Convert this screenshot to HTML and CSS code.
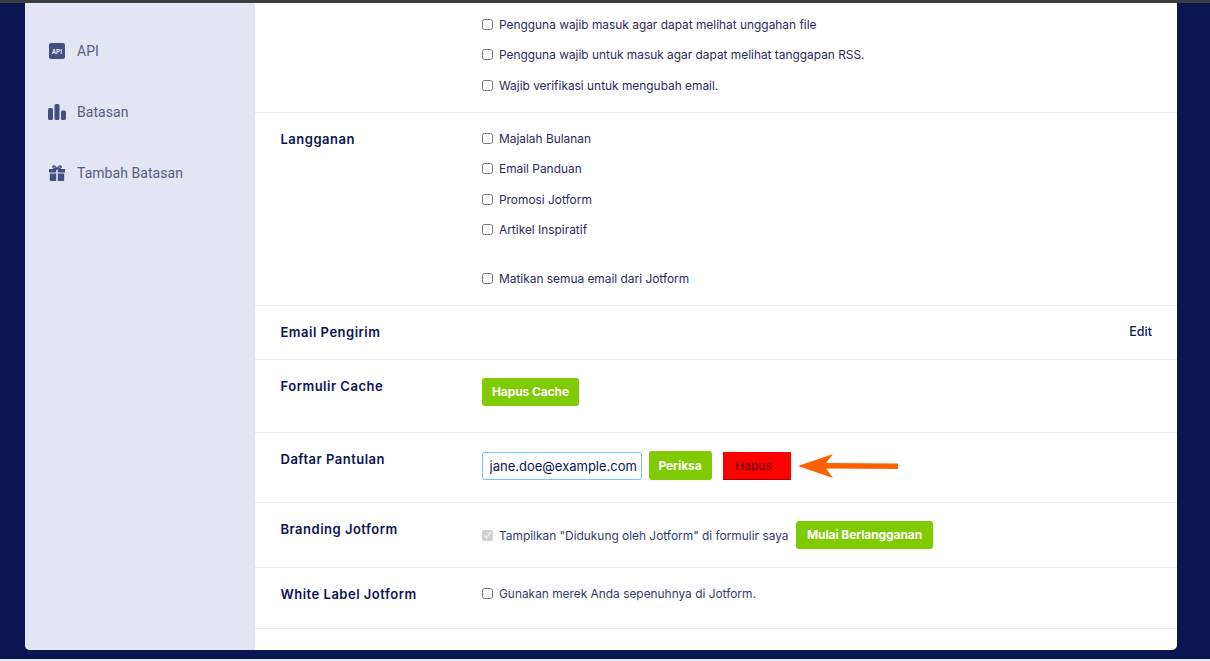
FILE: index.html
```html
<!DOCTYPE html>
<html lang="id">
<head>
<meta charset="utf-8">
<title>Pengaturan Jotform</title>
<link rel="stylesheet" href="styles.css">
</head>
<body>
<div class="topline"></div>
<div class="stage">
  <main class="card">
    <aside class="sidebar">
      <a class="navitem">
        <svg class="navicon" viewBox="0 0 16 16"><rect width="16" height="16" rx="2" fill="#454e80"/><text x="8" y="10.6" text-anchor="middle" class="apitext">API</text></svg>
        <span>API</span>
      </a>
      <a class="navitem">
        <svg class="navicon navicon-wide" viewBox="0 0 18 16"><rect x="0" y="4" width="5" height="12" rx="1.6" fill="#454e80"/><rect x="6.5" y="0" width="5" height="16" rx="1.6" fill="#454e80"/><rect x="13" y="6.5" width="5" height="9.5" rx="1.6" fill="#454e80"/></svg>
        <span>Batasan</span>
      </a>
      <a class="navitem">
        <svg class="navicon" viewBox="0 0 16 16"><path d="M0 4h7.2v3.4H0zM8.8 4H16v3.4H8.8zM.8 8.6h6.4V16H1.6a.8.8 0 0 1-.8-.8zM8.8 8.6h6.4v6.6a.8.8 0 0 1-.8.8H8.8z" fill="#454e80"/><path d="M8 4C6.5 1 4.5.3 3.9 1.3 3.3 2.6 5.5 4 8 4zM8 4c1.5-3 3.5-3.7 4.1-2.7C12.7 2.6 10.5 4 8 4z" fill="none" stroke="#454e80" stroke-width="1.3"/></svg>
        <span>Tambah Batasan</span>
      </a>
    </aside>
    <section class="content">
      <div class="row row-first">
        <div class="label"></div>
        <div class="opts">
          <label class="opt"><input type="checkbox"><span>Pengguna wajib masuk agar dapat melihat unggahan file</span></label>
          <label class="opt"><input type="checkbox"><span>Pengguna wajib untuk masuk agar dapat melihat tanggapan RSS.</span></label>
          <label class="opt"><input type="checkbox"><span>Wajib verifikasi untuk mengubah email.</span></label>
        </div>
      </div>
      <div class="row row-sub">
        <div class="label">Langganan</div>
        <div class="opts">
          <label class="opt"><input type="checkbox"><span>Majalah Bulanan</span></label>
          <label class="opt"><input type="checkbox"><span>Email Panduan</span></label>
          <label class="opt"><input type="checkbox"><span>Promosi Jotform</span></label>
          <label class="opt"><input type="checkbox"><span>Artikel Inspiratif</span></label>
          <label class="opt opt-apart"><input type="checkbox"><span>Matikan semua email dari Jotform</span></label>
        </div>
      </div>
      <div class="row row-sender">
        <div class="label">Email Pengirim</div>
        <a class="edit">Edit</a>
      </div>
      <div class="row row-cache">
        <div class="label">Formulir Cache</div>
        <button class="btn">Hapus Cache</button>
      </div>
      <div class="row row-bounce">
        <div class="label">Daftar Pantulan</div>
        <div class="bounce">
          <input class="email" type="text" value="jane.doe@example.com">
          <button class="btn btn-check">Periksa</button>
          <button class="btn-del">Hapus</button>
          <svg class="arrow" viewBox="0 0 100 24"><path d="M0 12 35 0 28 9 100 9.5V15L28 14.5 35 24Z" fill="#ff6100"/></svg>
        </div>
      </div>
      <div class="row row-brand">
        <div class="label">Branding Jotform</div>
        <div class="brand">
          <label class="opt opt-muted"><input type="checkbox" checked disabled><span>Tampilkan "Didukung oleh Jotform" di formulir saya</span></label>
          <button class="btn">Mulai Berlangganan</button>
        </div>
      </div>
      <div class="row row-white">
        <div class="label">White Label Jotform</div>
        <label class="opt opt-muted"><input type="checkbox"><span>Gunakan merek Anda sepenuhnya di Jotform.</span></label>
      </div>
    </section>
  </main>
</div>
<div class="bottomline"></div>
</body>
</html>
```
FILE: styles.css
```css
* { box-sizing: border-box; }
html, body { margin: 0; height: 661px; overflow: hidden; }
body {
  display: flex;
  flex-direction: column;
  background: #0a1551;
  font-family: "Inter", "Liberation Sans", sans-serif;
  font-size: 11.9px;
  color: #2c3345;
}
.topline { height: 3px; background: #3c3c3c; flex: none; }
.bottomline { height: 2px; background: #e8e8e8; flex: none; }
.stage { flex: 1; padding: 0 33px 9px 25px; min-height: 0; }
.card {
  display: flex;
  height: 647px;
  background: #fff;
  border-radius: 0 0 5px 5px;
  overflow: hidden;
}
.sidebar {
  width: 230px;
  flex: none;
  background: #e3e5f5;
  padding-top: 17px;
}
.navitem {
  display: flex;
  align-items: center;
  height: 61px;
  padding-left: 24px;
  gap: 12px;
  font-family: "Roboto", sans-serif;
  font-size: 14px;
  letter-spacing: .05px;
  color: #555d85;
}
.navicon { width: 16px; height: 16px; flex: none; }
.navicon-wide { width: 18px; margin-left: -1px; margin-right: -1px; }
.apitext { font: 700 6.5px "Roboto", sans-serif; fill: #e3e5f5; }
.content { flex: 1; min-width: 0; }
.row {
  display: flex;
  align-items: flex-start;
  border-bottom: 1px solid #e7e9f4;
  padding-left: 25.5px;
  padding-right: 25px;
}
.label {
  width: 201px;
  flex: none;
  font-weight: 600;
  font-size: 13px;
  letter-spacing: .5px;
  color: #0a1551;
}
.opts { display: flex; flex-direction: column; }
.opt {
  display: flex;
  align-items: center;
  height: 30.5px;
  gap: 6.5px;
  color: #2b2a5c;
}
.opt input { margin: 0; width: 11px; height: 11px; flex: none; }
.opt-apart { margin-top: 18px; }
.opt-muted { color: #343c6a; }
.row-first { height: 110px; padding-top: 6px; }
.row-sub { height: 193px; padding-top: 10px; }
.row-sub .label { padding-top: 8px; }
.row-sender { height: 54px; align-items: center; justify-content: space-between; padding-bottom: 2px; }
.edit { font-size: 12.5px; color: #0a1551; font-weight: 500; }
.row-cache { height: 73px; padding-top: 18px; }
.btn {
  height: 28px;
  padding: 0 10.5px 1px;
  border: 0;
  border-radius: 3px;
  background: #7fca00;
  color: #fff;
  font: 700 12px "Inter", "Liberation Sans", sans-serif;
  letter-spacing: -.1px;
  white-space: nowrap;
}
.row-bounce { height: 70px; padding-top: 18px; }
.bounce { display: flex; align-items: center; }
.email {
  width: 160px;
  height: 28px;
  padding: 0 0 0 7px;
  border: 1px solid #6fc4ff;
  border-radius: 3px;
  font: 13px "Inter", "Liberation Sans", sans-serif;
  color: #0a1551;
  outline: 0;
}
.btn-check { margin-left: 7px; width: 63px; height: 29px; padding: 0 0 1px; }
.btn-del {
  margin-left: 11px;
  width: 68px;
  height: 28px;
  padding: 0 6px 0 0;
  border: 0;
  border-bottom: 1px solid #a80000;
  background: #ff0000;
  color: #5a0010;
  font: 12px "Inter", "Liberation Sans", sans-serif;
}
.arrow { width: 100px; height: 24px; margin-left: 7px; }
.row-brand { height: 65px; padding-top: 18px; }
.brand { display: flex; align-items: center; gap: 8px; }
.brand .opt { height: 28px; }
.row-white { height: 61px; padding-top: 10px; }
.row-white .label { padding-top: 8px; }
```
